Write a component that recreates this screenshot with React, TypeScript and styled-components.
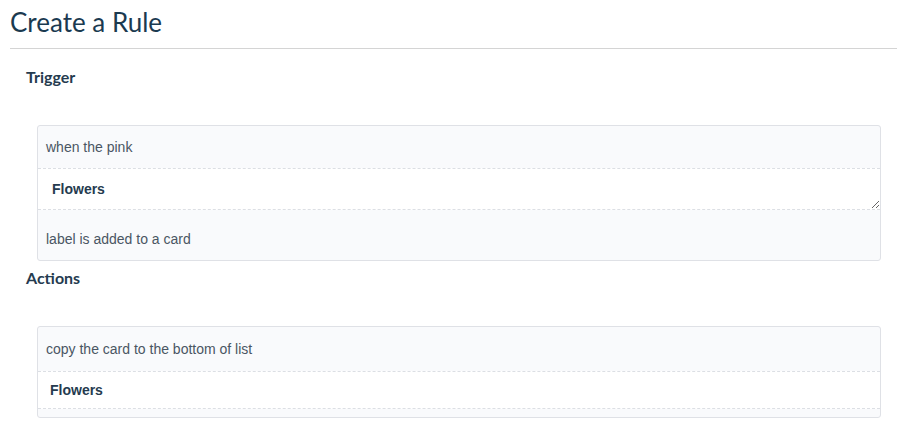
import React from 'react'
import styled, { createGlobalStyle } from 'styled-components'

const GlobalStyle = createGlobalStyle`
  html, body {
    margin: 0;
    padding: 0;
    background: #ffffff;
  }
  body {
    font-family: 'Liberation Sans', Arial, sans-serif;
  }
`

const Page = styled.div`
  padding: 0 0 0 10px;
  width: 887px;
`

const Title = styled.h1`
  margin: 0;
  padding-top: 6px;
  height: 42px;
  font-family: Lato, sans-serif;
  font-weight: 400;
  font-size: 26px;
  line-height: 32px;
  color: #1b3a50;
`

const Divider = styled.hr`
  margin: 0;
  border: none;
  border-top: 1px solid #d4d4d4;
`

const Section = styled.section`
  padding-left: 16px;
`

const SectionTitle = styled.h3<{ $top: number }>`
  margin: 0;
  height: 20px;
  padding-top: ${(p) => p.$top}px;
  font-family: Lato, sans-serif;
  font-weight: 700;
  font-size: 16px;
  line-height: 20px;
  color: #253b4f;
`

const Card = styled.div`
  margin: 38px 16px 0 11px;
  border: 1px solid #dfe1e6;
  border-radius: 3px;
  background: #f9fafc;
  overflow: hidden;
`

const Line = styled.div<{ $h: number; $pt?: number }>`
  box-sizing: border-box;
  height: ${(p) => p.$h}px;
  display: flex;
  align-items: center;
  padding: ${(p) => p.$pt ?? 0}px 8px 0;
  font-size: 14px;
  color: #4a5663;
`

const Field = styled.textarea`
  display: block;
  box-sizing: border-box;
  width: 100%;
  height: 42px;
  margin: 0;
  padding: 11px 14px;
  border: none;
  border-top: 1px dashed #dcdfe4;
  border-bottom: 1px dashed #dcdfe4;
  background: #ffffff;
  font-family: 'Liberation Sans', Arial, sans-serif;
  font-weight: 700;
  font-size: 14px;
  line-height: 18px;
  color: #253b4f;
  outline: none;
`

const Value = styled.div`
  height: 36px;
  display: flex;
  align-items: center;
  padding: 0 12px;
  border-top: 1px dashed #dcdfe4;
  border-bottom: 1px dashed #dcdfe4;
  background: #ffffff;
  font-weight: 700;
  font-size: 14px;
  color: #253b4f;
`

const Tail = styled.div`
  height: 8px;
`

export default function App() {
  return (
    <Page>
      <GlobalStyle />
      <Title>Create a Rule</Title>
      <Divider />
      <Section>
        <SectionTitle $top={18}>Trigger</SectionTitle>
        <Card>
          <Line $h={42}>when the pink</Line>
          <Field defaultValue="Flowers" />
          <Line $h={50} $pt={8}>label is added to a card</Line>
        </Card>
        <SectionTitle $top={7}>Actions</SectionTitle>
        <Card>
          <Line $h={44}>copy the card to the bottom of list</Line>
          <Value>Flowers</Value>
          <Tail />
        </Card>
      </Section>
    </Page>
  )
}
